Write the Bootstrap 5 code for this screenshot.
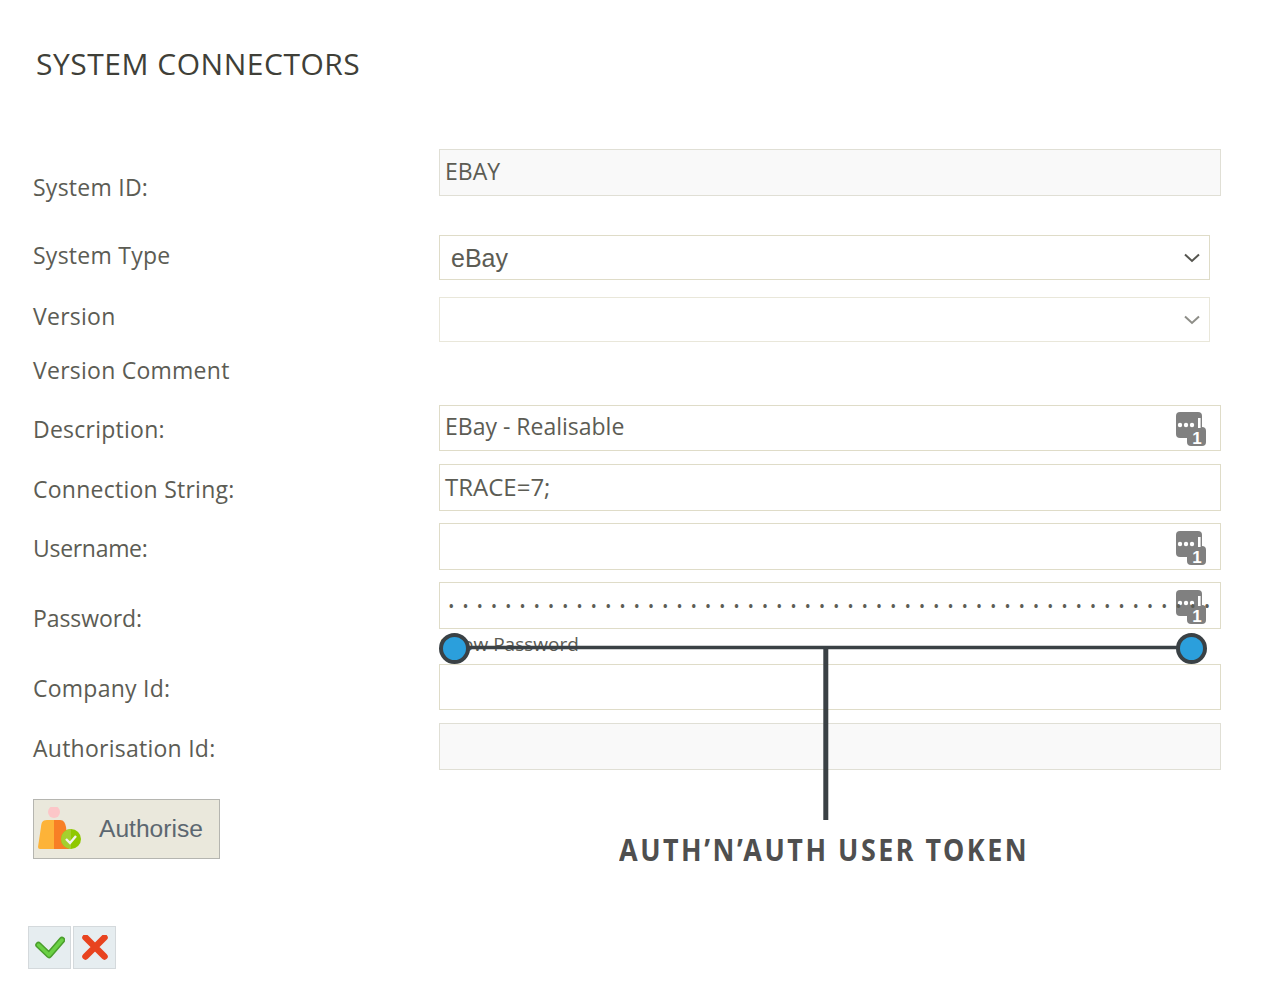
<!DOCTYPE html>
<html lang="en"><head><meta charset="utf-8"><title>System Connectors</title>
<link rel="stylesheet" href="https://cdn.jsdelivr.net/npm/bootstrap@5.3.0/dist/css/bootstrap.min.css">
<style>
html,body{height:1006px;overflow:hidden;background:#fff}
body{font-family:"Open Sans","Noto Sans",sans-serif;color:#5c5c54;position:relative}
.sc-title{font-size:30px;font-weight:400;color:#3f3f38;line-height:40px;margin:0;padding:44px 0 0 36px;height:149px;letter-spacing:.52px}
.sc-form{padding-left:33px;width:1221px}
.sc-row{display:flex}
.sc-lab{width:406px;flex:none;font-size:23px;line-height:30px;margin:0;letter-spacing:.25px;position:relative;top:-1px}
.sc-tight{letter-spacing:-.3px}
.sc-tight2{letter-spacing:-.08px}
.sc-box{flex:0 0 782px;min-width:0;position:relative}
.sc-in{display:flex;align-items:center;width:100%;height:47px;border:1px solid #dfdcc8;background:#fff;padding:0 5px;font-size:23px;color:#5c5c54;line-height:1}
.sc-in.sc-ro{background:#f9f9f9;border-color:#e0dfd5}
.sc-sel{width:771px;height:45px;font-family:"Liberation Sans",sans-serif;font-size:25px;padding:0 9px 0 11px;justify-content:space-between}
.sc-sel.sc-dim{border-color:#e9e7da}
.sc-txt{position:relative;top:1px}
.sc-up{padding-bottom:4px}
.sc-big{font-size:24px;padding-bottom:2px}
.sc-key{position:absolute;right:15px;top:8px;width:30px;height:34px}
.sc-key.sc-k7{top:7px}
.sc-in.sc-pw{padding:0 0 0 9px}
.sc-dots{letter-spacing:9.75px;font-size:12px;color:#5c5c54;white-space:nowrap;font-weight:700;display:block;flex:none;line-height:14px;position:relative;top:1px;z-index:1}
.sc-show{font-size:19px;line-height:24px;height:35px;padding:3px 0 0 1px;color:#5c5c54}
.sc-auth{display:flex;align-items:center;width:187px;height:60px;border:1px solid #b5b5b0;background:#eae8dc;font-family:"Liberation Sans",sans-serif;font-size:24.6px;color:#5c6770;padding:0 0 0 4px;border-radius:0}
.sc-auth svg{margin-right:17px}
.sc-foot{display:flex;gap:2px;padding-left:28px;margin-top:67px}
.sc-ic{width:43px;height:43px;padding:0;background:#e6edf0;border:1px solid #d4d9dc;border-radius:0;display:flex;align-items:center;justify-content:center}
.sc-over{position:absolute;left:0;top:0;pointer-events:none}
.sc-cap{position:absolute;left:619px;top:829px;font-family:"Noto Sans",sans-serif;font-weight:700;font-size:31px;line-height:40px;color:#4f4f4f;letter-spacing:2.9px;white-space:nowrap;margin:0;transform:scaleX(.868);transform-origin:left center}
</style></head><body>
<h1 class="sc-title">SYSTEM CONNECTORS</h1>
<form class="sc-form">
 <div class="sc-row" style="height:86px"><label class="sc-lab" style="padding-top:24px">System ID:</label><div class="sc-box"><div class="sc-in sc-ro" style="padding-bottom:2px">EBAY</div></div></div>
 <div class="sc-row" style="height:62px"><label class="sc-lab" style="margin-top:6px">System Type</label><div class="sc-box"><div class="sc-in sc-sel"><span class="sc-txt">eBay</span><svg width="16" height="10" viewBox="0 0 16 10"><path d="M1 1.500l7 6.500 7-6.500" fill="none" stroke="#55554f" stroke-width="2"/></svg></div></div></div>
 <div class="sc-row" style="height:56px"><label class="sc-lab" style="margin-top:5px">Version</label><div class="sc-box"><div class="sc-in sc-sel sc-dim"><span></span><svg width="16" height="10" viewBox="0 0 16 10"><path d="M1 1.500l7 6.500 7-6.500" fill="none" stroke="#8e8e88" stroke-width="2"/></svg></div></div></div>
 <div class="sc-row" style="height:52px"><label class="sc-lab" style="margin-top:3px">Version Comment</label><div class="sc-box"></div></div>
 <div class="sc-row" style="height:59px"><label class="sc-lab" style="margin-top:10px">Description:</label><div class="sc-box"><div class="sc-in sc-up" style="height:46px">EBay - Realisable</div>
  <svg class="sc-key sc-k7" viewBox="0 0 30 34"><use href="#keyico"/></svg></div></div>
 <div class="sc-row" style="height:59px"><label class="sc-lab" style="margin-top:11px">Connection String:</label><div class="sc-box"><div class="sc-in sc-big">TRACE=7;</div></div></div>
 <div class="sc-row" style="height:59px"><label class="sc-lab sc-tight" style="margin-top:11px">Username:</label><div class="sc-box"><div class="sc-in"></div><svg class="sc-key" viewBox="0 0 30 34"><use href="#keyico"/></svg></div></div>
 <div class="sc-row"><label class="sc-lab sc-tight2" style="margin-top:22px">Password:</label><div class="sc-box"><div class="sc-in sc-pw"><span class="sc-dots">••••••••••••••••••••••••••••••••••••••••••••••••••••••</span></div><svg class="sc-key" viewBox="0 0 30 34"><use href="#keyico"/></svg><div class="sc-show">Show Password</div></div></div>
 <div class="sc-row" style="height:59px"><label class="sc-lab" style="margin-top:10px">Company Id:</label><div class="sc-box"><div class="sc-in" style="height:46px"></div></div></div>
 <div class="sc-row" style="height:76px"><label class="sc-lab" style="margin-top:11px">Authorisation Id:</label><div class="sc-box"><div class="sc-in sc-ro"></div></div></div>
 <button type="button" class="sc-auth btn"><svg width="44" height="44" viewBox="0 0 44 44"><circle cx="16" cy="5" r="6" fill="#fcc6c8"/><path d="M16 13H9C4 13 3.500 16 3 20L0 40q0 2 2 2H16z" fill="#fdb338"/><path d="M16 13h6c4 0 5 3 6 7l3 22H16z" fill="#f87f25"/><circle cx="33" cy="32" r="10" fill="#8fc800"/><path d="M33 22a10 10 0 0 0 0 20z" fill="#a5cf2e"/><path d="M28 32l4 4 6-7" fill="none" stroke="#f2f2f2" stroke-width="2.400"/></svg>Authorise</button>
</form>
<div class="sc-foot">
 <button type="button" class="sc-ic btn" aria-label="OK"><svg width="30" height="24" viewBox="0 0 30 24"><path d="M3.500 9l10.500 10L27 4" fill="none" stroke="#4a9e2c" stroke-width="6.500" stroke-linecap="round" stroke-linejoin="round"/><path d="M3.500 9l10.500 10L27 4" fill="none" stroke="#6ad044" stroke-width="3.500" stroke-linecap="round" stroke-linejoin="round"/></svg></button>
 <button type="button" class="sc-ic btn" aria-label="Cancel"><svg width="28" height="26" viewBox="0 0 28 26"><path d="M4.500 2.500l19 19M23.500 2.500l-19 19" stroke="#e8431f" stroke-width="6.500" stroke-linecap="round"/></svg></button>
</div>
<svg width="0" height="0" class="d-block"><defs><g id="keyico"><rect x="0" y="0" width="26" height="26" rx="4" fill="#808080"/><rect x="11" y="15" width="19" height="19" rx="4" fill="#808080"/><g fill="#fff"><circle cx="4" cy="13" r="2.200"/><circle cx="10" cy="13" r="2.200"/><circle cx="16" cy="13" r="2.200"/><rect x="22" y="6" width="2.600" height="10"/><text x="21" y="31.500" text-anchor="middle" font-family="Liberation Sans" font-weight="700" font-size="17">1</text></g></g></defs></svg>
<svg class="sc-over" width="1284" height="1006" viewBox="0 0 1284 1006"><path d="M455 647.500H1191" fill="none" stroke="#3a4145" stroke-width="3.500"/><path d="M825.800 647V820" fill="none" stroke="#3a4145" stroke-width="5"/><circle cx="454.500" cy="648.500" r="13.500" fill="#2b9fdc" stroke="#3a4145" stroke-width="4"/><circle cx="1191.500" cy="648.500" r="13.500" fill="#2b9fdc" stroke="#3a4145" stroke-width="4"/></svg>
<p class="sc-cap">AUTH’N’AUTH USER TOKEN</p>
</body></html>
